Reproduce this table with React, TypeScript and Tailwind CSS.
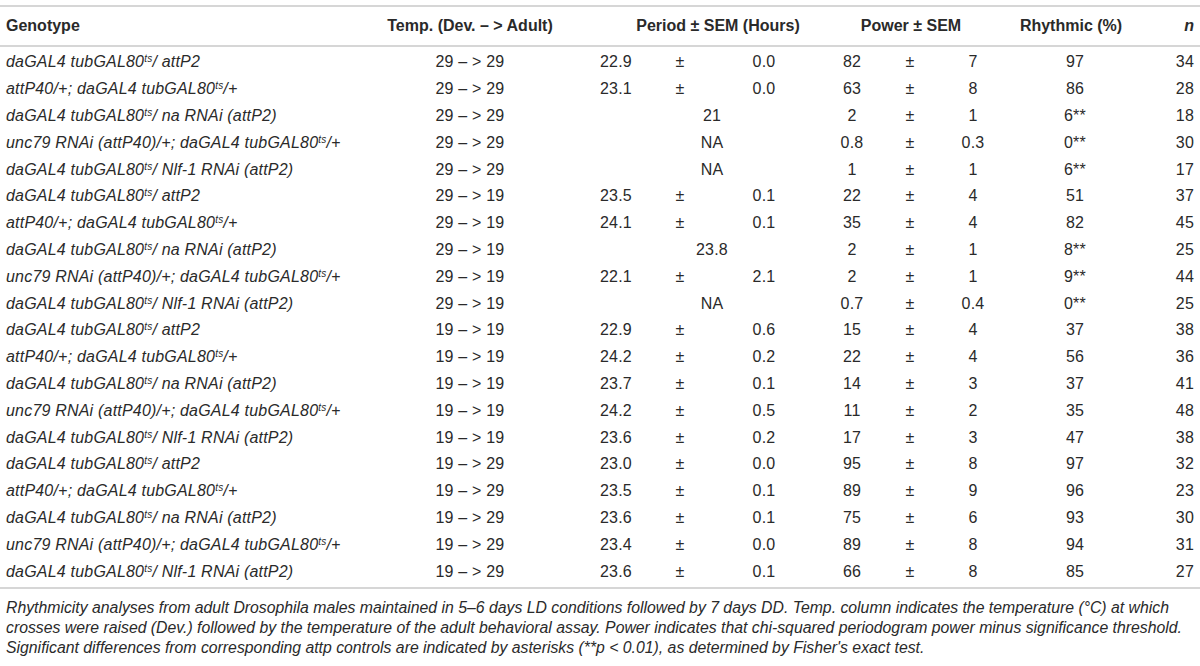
import React from 'react';

type Row = {
  g: number;
  temp: string;
  p: [string, string] | string;
  w: [string, string];
  r: string;
  n: string;
};

const GENO = [
  <>daGAL4 tubGAL80<sup className="text-[10px]">ts</sup>/ attP2</>,
  <>attP40/+; daGAL4 tubGAL80<sup className="text-[10px]">ts</sup>/+</>,
  <>daGAL4 tubGAL80<sup className="text-[10px]">ts</sup>/ na RNAi (attP2)</>,
  <>unc79 RNAi (attP40)/+; daGAL4 tubGAL80<sup className="text-[10px]">ts</sup>/+</>,
  <>daGAL4 tubGAL80<sup className="text-[10px]">ts</sup>/ Nlf-1 RNAi (attP2)</>,
];

const rows: Row[] = [
  { g: 0, temp: '29 – > 29', p: ['22.9', '0.0'], w: ['82', '7'], r: '97', n: '34' },
  { g: 1, temp: '29 – > 29', p: ['23.1', '0.0'], w: ['63', '8'], r: '86', n: '28' },
  { g: 2, temp: '29 – > 29', p: '21', w: ['2', '1'], r: '6**', n: '18' },
  { g: 3, temp: '29 – > 29', p: 'NA', w: ['0.8', '0.3'], r: '0**', n: '30' },
  { g: 4, temp: '29 – > 29', p: 'NA', w: ['1', '1'], r: '6**', n: '17' },
  { g: 0, temp: '29 – > 19', p: ['23.5', '0.1'], w: ['22', '4'], r: '51', n: '37' },
  { g: 1, temp: '29 – > 19', p: ['24.1', '0.1'], w: ['35', '4'], r: '82', n: '45' },
  { g: 2, temp: '29 – > 19', p: '23.8', w: ['2', '1'], r: '8**', n: '25' },
  { g: 3, temp: '29 – > 19', p: ['22.1', '2.1'], w: ['2', '1'], r: '9**', n: '44' },
  { g: 4, temp: '29 – > 19', p: 'NA', w: ['0.7', '0.4'], r: '0**', n: '25' },
  { g: 0, temp: '19 – > 19', p: ['22.9', '0.6'], w: ['15', '4'], r: '37', n: '38' },
  { g: 1, temp: '19 – > 19', p: ['24.2', '0.2'], w: ['22', '4'], r: '56', n: '36' },
  { g: 2, temp: '19 – > 19', p: ['23.7', '0.1'], w: ['14', '3'], r: '37', n: '41' },
  { g: 3, temp: '19 – > 19', p: ['24.2', '0.5'], w: ['11', '2'], r: '35', n: '48' },
  { g: 4, temp: '19 – > 19', p: ['23.6', '0.2'], w: ['17', '3'], r: '47', n: '38' },
  { g: 0, temp: '19 – > 29', p: ['23.0', '0.0'], w: ['95', '8'], r: '97', n: '32' },
  { g: 1, temp: '19 – > 29', p: ['23.5', '0.1'], w: ['89', '9'], r: '96', n: '23' },
  { g: 2, temp: '19 – > 29', p: ['23.6', '0.1'], w: ['75', '6'], r: '93', n: '30' },
  { g: 3, temp: '19 – > 29', p: ['23.4', '0.0'], w: ['89', '8'], r: '94', n: '31' },
  { g: 4, temp: '19 – > 29', p: ['23.6', '0.1'], w: ['66', '8'], r: '85', n: '27' },
];

const cols = 'grid grid-cols-[380px_180px_108px_24px_144px_32px_84px_42px_1fr_44px]';

export default function App() {
  return (
    <div className="w-[1200px] h-[666px] bg-white text-[#2a2a2a] font-['Liberation_Sans',Arial,sans-serif] text-[16px] tracking-[0.2px] pt-[5px]">
      <div className="border-t-2 border-b-2 border-[#d6d6d6]">
        <div className={`${cols} h-[38px] items-center font-bold tracking-normal`}>
          <div className="pl-[6px]">Genotype</div>
          <div className="text-center">Temp. (Dev. – &gt; Adult)</div>
          <div className="col-span-3 text-center pl-[40px]">Period ± SEM (Hours)</div>
          <div className="col-span-3 text-center pr-[8px]">Power ± SEM</div>
          <div className="text-center pr-[8px]">Rhythmic (%)</div>
          <div className="text-right pr-[6px] italic">n</div>
        </div>
      </div>
      <div className="border-b-2 border-[#d6d6d6] pt-[2px] pb-[2px]">
        {rows.map((row, i) => (
          <div key={i} className={`${cols} h-[26.8px] items-center`}>
            <div className="pl-[6px] italic whitespace-nowrap">{GENO[row.g]}</div>
            <div className="text-center">{row.temp}</div>
            {typeof row.p === 'string' ? (
              <div className="col-span-3 text-center pl-[28px]">{row.p}</div>
            ) : (
              <>
                <div className="text-center pl-[4px]">{row.p[0]}</div>
                <div className="text-center">±</div>
                <div className="text-center">{row.p[1]}</div>
              </>
            )}
            <div className="text-center">{row.w[0]}</div>
            <div className="text-center">±</div>
            <div className="text-center">{row.w[1]}</div>
            <div className="text-center">{row.r}</div>
            <div className="text-right pr-[6px]">{row.n}</div>
          </div>
        ))}
      </div>
      <p className="italic text-[15.8px] leading-[20px] tracking-normal pl-[6px] pt-[9px]">
        Rhythmicity analyses from adult Drosophila males maintained in 5–6 days LD conditions followed by 7 days DD. Temp. column indicates the temperature (°C) at which crosses were raised (Dev.) followed by the temperature of the adult behavioral assay. Power indicates that chi-squared periodogram power minus significance threshold. Significant differences from corresponding attp controls are indicated by asterisks (**p &lt; 0.01), as determined by Fisher's exact test.
      </p>
    </div>
  );
}
